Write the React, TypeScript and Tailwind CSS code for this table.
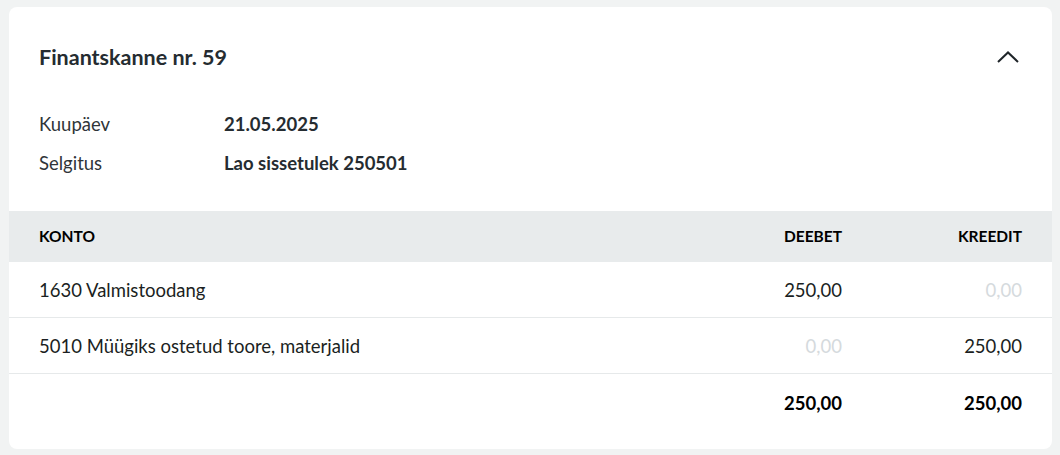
import React, { useState } from 'react'

type Row = {
  account: string
  debit: string
  credit: string
}

const rows: Row[] = [
  { account: '1630 Valmistoodang', debit: '250,00', credit: '0,00' },
  { account: '5010 Müügiks ostetud toore, materjalid', debit: '0,00', credit: '250,00' },
]

const Amount = ({ value }: { value: string }) => (
  <span className={value === '0,00' ? 'text-[#d5dadd]' : 'text-[#1b1f22]'}>{value}</span>
)

const App = () => {
  const [isOpen, setIsOpen] = useState(true)

  return (
    <div
      className="min-h-[455px] bg-[#f1f3f3] pl-[9px] pr-[8px] pt-[7px]"
      style={{ fontFamily: 'Lato, "Noto Sans", sans-serif' }}
    >
      <div className="rounded-lg bg-white pb-[19px] text-[#1b1f22]">
        <div className="flex h-[98px] items-center justify-between px-[30px] pt-[2px]">
          <h3 className="text-[21.5px] font-bold text-[#252c31]">Finantskanne nr. 59</h3>
          <button type="button" onClick={() => setIsOpen(!isOpen)} className="mr-[3px]">
            <svg width="22" height="12" viewBox="0 0 22 12" fill="none" stroke="#1f2529" strokeWidth="2">
              <path d={isOpen ? 'M1 11 L11 1.5 L21 11' : 'M1 1 L11 10.5 L21 1'} />
            </svg>
          </button>
        </div>

        {isOpen && (
          <>
            <div className="px-[30px] pb-[28px] text-[18.5px]">
              <div className="flex h-[39px] items-center">
                <span className="w-[185px] text-[#2f3539]">Kuupäev</span>
                <span className="font-bold text-[#252c31]">21.05.2025</span>
              </div>
              <div className="flex h-[39px] items-center">
                <span className="w-[185px] text-[#2f3539]">Selgitus</span>
                <span className="font-bold text-[#252c31]">Lao sissetulek 250501</span>
              </div>
            </div>

            <div className="grid h-[51px] grid-cols-[1fr_180px_180px] items-center bg-[#e8ebec] px-[30px] text-[15.5px] font-bold text-black">
              <span>KONTO</span>
              <span className="text-right">DEEBET</span>
              <span className="text-right">KREEDIT</span>
            </div>

            {rows.map((row) => (
              <div
                key={row.account}
                className="grid h-[56px] grid-cols-[1fr_180px_180px] items-center border-b border-[#e6e9ea] px-[30px] pt-[3px] text-[18.5px]"
              >
                <span>{row.account}</span>
                <span className="text-right">
                  <Amount value={row.debit} />
                </span>
                <span className="text-right">
                  <Amount value={row.credit} />
                </span>
              </div>
            ))}

            <div className="grid h-[56px] grid-cols-[1fr_180px_180px] items-center px-[30px] pt-[3px] text-[18.5px] font-bold text-black">
              <span />
              <span className="text-right">250,00</span>
              <span className="text-right">250,00</span>
            </div>
          </>
        )}
      </div>
    </div>
  )
}

export default App
